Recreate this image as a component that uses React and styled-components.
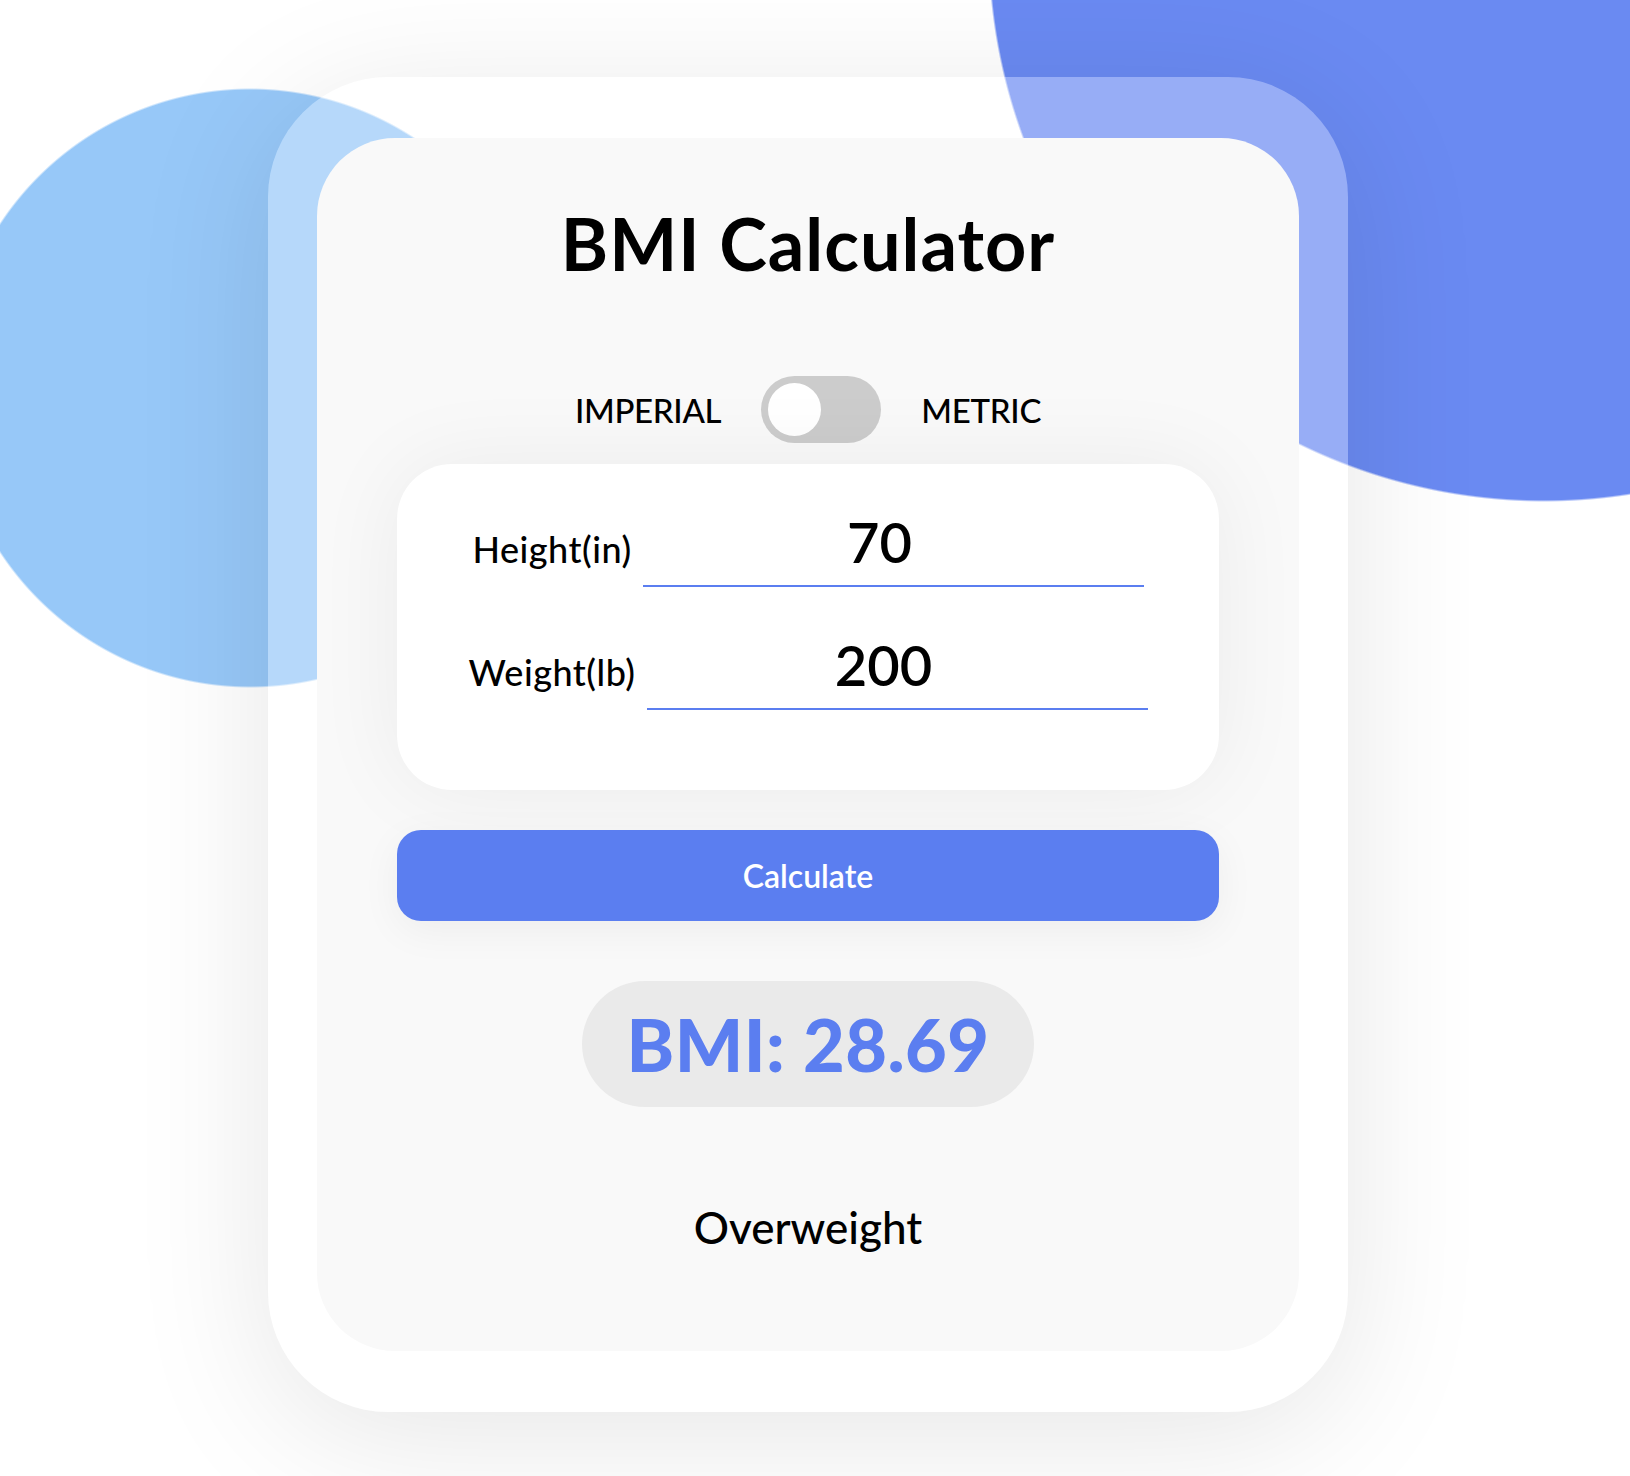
import { useState } from 'react';
import styled, { createGlobalStyle } from 'styled-components';

const GlobalStyle = createGlobalStyle`
  body {
    margin: 0;
    background: #fff;
    font-family: Lato, "Noto Sans", sans-serif;
    color: #000;
  }
`;

const Page = styled.div`
  min-height: 1476px;
  box-sizing: border-box;
  padding: 77px 0 0 268px;
  overflow: hidden;
  background:
    radial-gradient(circle 556px at 1544px -54px, #6a8af2 99.6%, transparent 100%),
    radial-gradient(circle 300px at 250px 388px, #97c8f8 99.3%, transparent 100%),
    #fff;
`;

const Frame = styled.div`
  width: 1080px;
  height: 1335px;
  box-sizing: border-box;
  padding: 61px 49px;
  border-radius: 120px;
  background: rgba(255, 255, 255, 0.3);
  box-shadow: 0 24px 140px rgba(0, 0, 0, 0.1);
`;

const Card = styled.main`
  height: 100%;
  box-sizing: border-box;
  padding: 62px 80px 0;
  border-radius: 78px;
  background: #f9f9f9;
  display: flex;
  flex-direction: column;
  align-items: center;
`;

const Title = styled.h1`
  margin: 0;
  font-size: 72px;
  line-height: 86px;
  font-weight: 700;
  letter-spacing: 1px;
`;

const UnitSwitch = styled.div`
  margin-top: 90px;
  height: 67px;
  display: flex;
  align-items: center;
  gap: 40px;
`;

const UnitName = styled.span`
  font-size: 33px;
  font-weight: 500;
  letter-spacing: -0.3px;
`;

const Track = styled.button`
  width: 120px;
  height: 67px;
  box-sizing: border-box;
  padding: 0 7px;
  border: none;
  border-radius: 34px;
  background: ${p => (p.$on ? '#5b7ef0' : '#cccccc')};
  display: flex;
  align-items: center;
  justify-content: ${p => (p.$on ? 'flex-end' : 'flex-start')};
  cursor: pointer;
`;

const Knob = styled.span`
  width: 53px;
  height: 53px;
  border-radius: 50%;
  background: #fff;
`;

const Panel = styled.section`
  margin-top: 21px;
  width: 100%;
  box-sizing: border-box;
  padding: 44px 0 80px;
  border-radius: 55px;
  background: #fff;
  box-shadow: 0 0 90px rgba(0, 0, 0, 0.06);
  display: flex;
  flex-direction: column;
  gap: 44px;
`;

const Field = styled.label`
  display: flex;
  justify-content: center;
  align-items: flex-end;
  gap: 11px;
`;

const FieldName = styled.span`
  font-size: 36px;
  line-height: 43px;
  font-weight: 500;
  letter-spacing: 0.5px;
  padding-bottom: 16px;
`;

const NumberInput = styled.input`
  width: 501px;
  height: 79px;
  box-sizing: border-box;
  padding: 0 27px 10px 0;
  border: none;
  border-bottom: 2px solid #5b7ef0;
  background: transparent;
  font-family: inherit;
  font-size: 56px;
  line-height: 67px;
  font-weight: 600;
  color: #000;
  text-align: center;
  outline: none;
`;

const CalcButton = styled.button`
  margin-top: 40px;
  width: 100%;
  height: 91px;
  border: none;
  border-radius: 24px;
  background: #5b7ef0;
  color: #fff;
  font-family: inherit;
  font-size: 32px;
  font-weight: 600;
  box-shadow: 0 10px 40px rgba(0, 0, 0, 0.05);
  cursor: pointer;
`;

const Result = styled.div`
  margin-top: 60px;
  height: 126px;
  padding: 0 44px;
  border-radius: 63px;
  background: #eaeaea;
  color: #5b7ef0;
  font-size: 72px;
  font-weight: 900;
  letter-spacing: 0.5px;
  display: flex;
  align-items: center;
`;

const Status = styled.p`
  margin: 94px 0 0;
  font-size: 44px;
  line-height: 53px;
  font-weight: 500;
`;

const category = bmi => {
  if (bmi < 18.5) return 'Underweight';
  if (bmi < 25) return 'Normal';
  if (bmi < 30) return 'Overweight';
  return 'Obese';
};

export default function App() {
  const [metric, setMetric] = useState(false);
  const [height, setHeight] = useState('70');
  const [weight, setWeight] = useState('200');
  const [bmi, setBmi] = useState(28.69);

  const calculate = () => {
    const h = parseFloat(height);
    const w = parseFloat(weight);
    if (!h || !w) return;
    const value = metric ? w / ((h / 100) * (h / 100)) : (703 * w) / (h * h);
    setBmi(Math.round(value * 100) / 100);
  };

  return (
    <Page>
      <GlobalStyle />
      <Frame>
        <Card>
          <Title>BMI Calculator</Title>
          <UnitSwitch>
            <UnitName>IMPERIAL</UnitName>
            <Track $on={metric} onClick={() => setMetric(!metric)}>
              <Knob />
            </Track>
            <UnitName>METRIC</UnitName>
          </UnitSwitch>
          <Panel>
            <Field>
              <FieldName>{metric ? 'Height(cm)' : 'Height(in)'}</FieldName>
              <NumberInput value={height} onChange={e => setHeight(e.target.value)} />
            </Field>
            <Field>
              <FieldName>{metric ? 'Weight(kg)' : 'Weight(lb)'}</FieldName>
              <NumberInput value={weight} onChange={e => setWeight(e.target.value)} />
            </Field>
          </Panel>
          <CalcButton onClick={calculate}>Calculate</CalcButton>
          <Result>BMI: {bmi.toFixed(2)}</Result>
          <Status>{category(bmi)}</Status>
        </Card>
      </Frame>
    </Page>
  );
}
